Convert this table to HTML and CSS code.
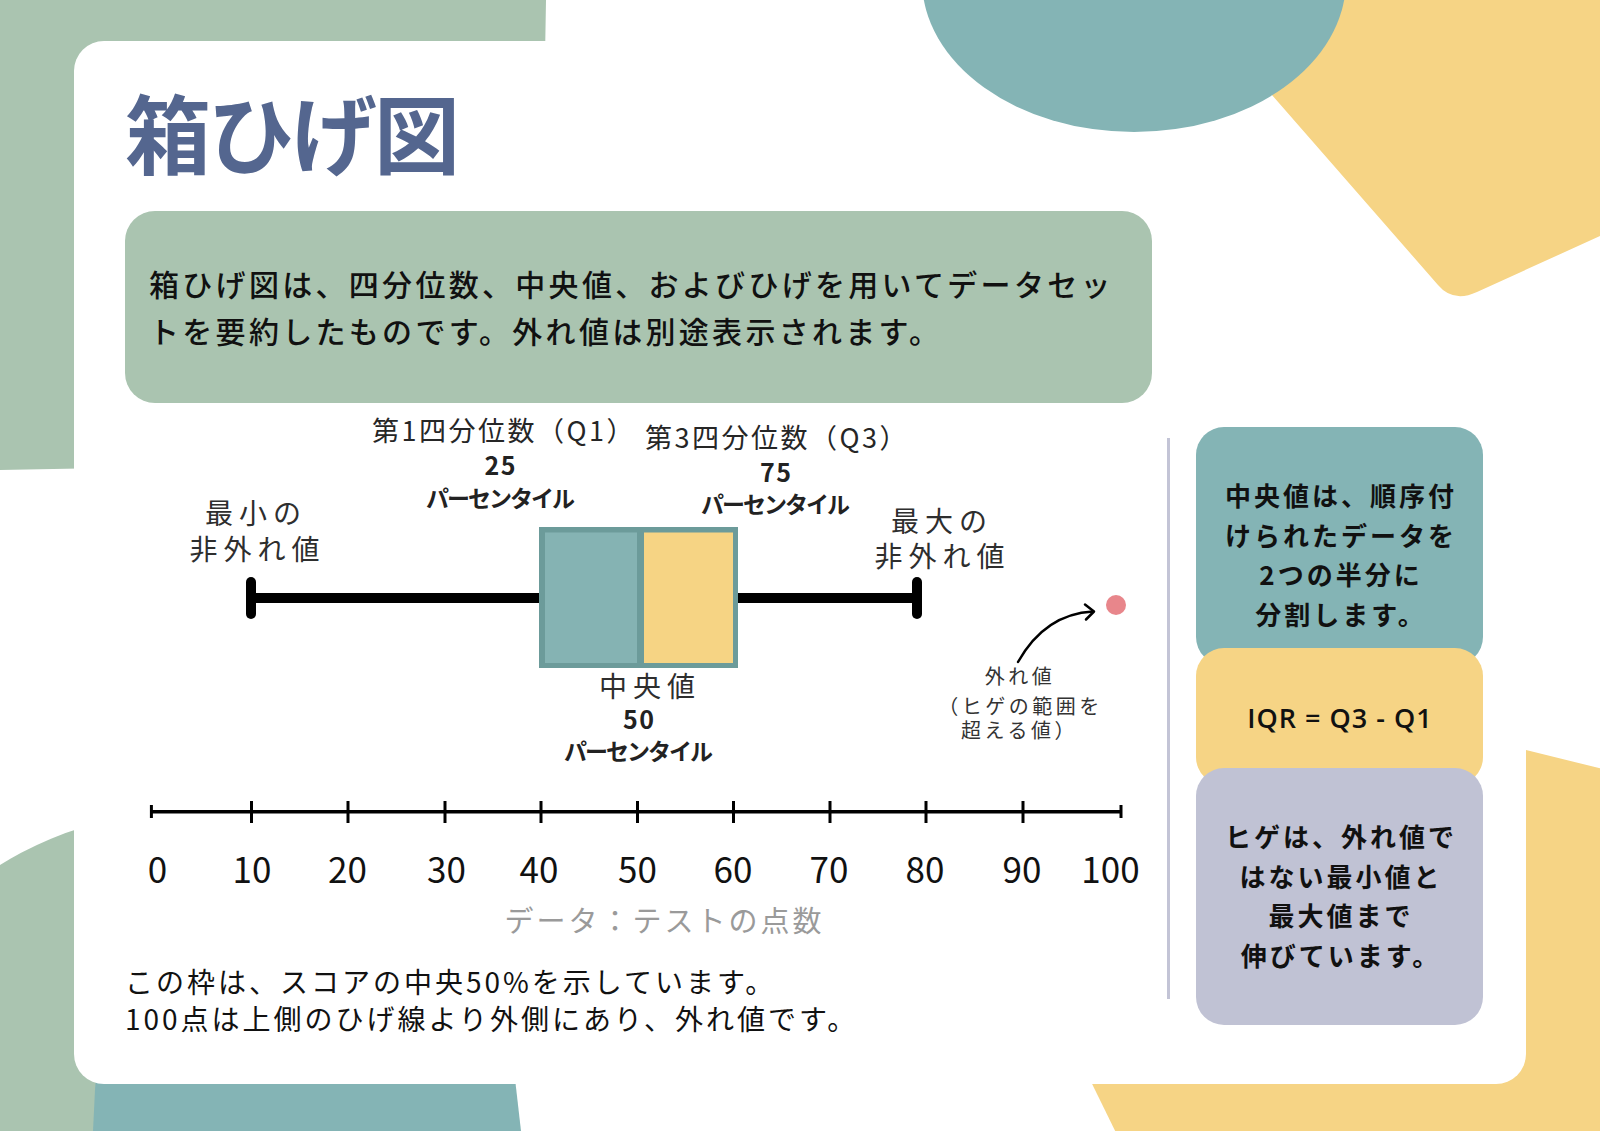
FILE: index.html
```html
<!DOCTYPE html>
<html lang="ja">
<head>
<meta charset="utf-8">
<title>箱ひげ図</title>
<link rel="stylesheet" href="styles.css">
</head>
<body>
<div class="page">
  <svg class="bg" width="1600" height="1131" viewBox="0 0 1600 1131" aria-hidden="true">
    <path class="bg-green" d="M0 0H546L538 462Q300 464 0 470Z"/>
    <circle class="bg-green" cx="180" cy="1150" r="337"/>
    <path class="bg-teal" d="M101 1070H514L521 1131H93L95 1090Q96 1072 101 1070Z"/>
    <path class="bg-yellow" d="M846 582L1700 793V1200H1149Z"/>
  </svg>

  <main class="card">
    <h1 class="title">箱ひげ図</h1>
    <p class="intro">箱ひげ図は、四分位数、中央値、およびひげを用いてデータセッ<br>トを要約したものです。外れ値は別途表示されます。</p>

    <div class="main">
      <div class="left">
        <svg class="chart" width="1042" height="537" viewBox="125 403 1042 537">
          <!-- Q1 label group -->
          <text class="t-lbl"><tspan x="504" y="441">第1四分位数（Q1）</tspan><tspan class="t-num" x="500.7" y="475">25</tspan><tspan class="t-pct" x="499.5" y="507">パーセンタイル</tspan></text>

          <!-- Q3 label group -->
          <text class="t-lbl"><tspan x="777" y="448">第3四分位数（Q3）</tspan><tspan class="t-num" x="776.3" y="482">75</tspan><tspan class="t-pct" x="774.5" y="513">パーセンタイル</tspan></text>

          <text class="t-lbl2"><tspan x="256" y="524">最小の</tspan><tspan x="257.5" y="560">非外れ値</tspan></text>
          <text class="t-lbl2"><tspan x="942" y="531.6">最大の</tspan><tspan x="942.5" y="567">非外れ値</tspan></text>

          <!-- whiskers -->
          <line class="wh" x1="251" y1="598" x2="917" y2="598"/>
          <line class="cap" x1="251" y1="582" x2="251" y2="614"/>
          <line class="cap" x1="917" y1="582" x2="917" y2="614"/>

          <!-- box -->
          <rect class="box-edge" x="539" y="527" width="199" height="141"/>
          <rect class="box-q1" x="545" y="532.5" width="92" height="130.5"/>
          <rect class="box-q3" x="644" y="532.5" width="89" height="130.5"/>

          <text class="t-lbl2"><tspan x="650" y="697">中央値</tspan><tspan class="t-num" x="639.3" y="728.5">50</tspan><tspan class="t-pct" x="637.5" y="759.5">パーセンタイル</tspan></text>

          <!-- outlier -->
          <circle class="dot" cx="1116" cy="605" r="10"/>
          <path class="arrow" d="M1018 662Q1045 614 1093 611.5"/>
          <path class="arrow" d="M1085 604.5L1094 611.5L1086 619.5"/>
          <text class="t-small"><tspan x="1020" y="684">外れ値</tspan><tspan x="1020.5" y="713.5">（ヒゲの範囲を</tspan><tspan x="1019.5" y="737.5">超える値）</tspan></text>

          <!-- axis -->
          <line class="axis" x1="151.4" y1="811.7" x2="1121" y2="811.7"/>
          <line class="tick" x1="151.4" y1="805" x2="151.4" y2="818"/>
          <line class="tick" x1="251.5" y1="801" x2="251.5" y2="823"/>
          <line class="tick" x1="348" y1="801" x2="348" y2="823"/>
          <line class="tick" x1="445" y1="801" x2="445" y2="823"/>
          <line class="tick" x1="541" y1="801" x2="541" y2="823"/>
          <line class="tick" x1="637.5" y1="801" x2="637.5" y2="823"/>
          <line class="tick" x1="733.5" y1="801" x2="733.5" y2="823"/>
          <line class="tick" x1="830" y1="801" x2="830" y2="823"/>
          <line class="tick" x1="926" y1="801" x2="926" y2="823"/>
          <line class="tick" x1="1023" y1="801" x2="1023" y2="823"/>
          <line class="tick" x1="1121" y1="805" x2="1121" y2="818"/>

          <text class="t-axis" x="157.5" y="883">0</text>
          <text class="t-axis" x="252" y="883">10</text>
          <text class="t-axis" x="347.5" y="883">20</text>
          <text class="t-axis" x="446.5" y="883">30</text>
          <text class="t-axis" x="539" y="883">40</text>
          <text class="t-axis" x="637.5" y="883">50</text>
          <text class="t-axis" x="733" y="883">60</text>
          <text class="t-axis" x="829" y="883">70</text>
          <text class="t-axis" x="925" y="883">80</text>
          <text class="t-axis" x="1022" y="883">90</text>
          <text class="t-axis" x="1110.5" y="883">100</text>

          <text class="t-data" x="664.5" y="932">データ：テストの点数</text>
        </svg>
        <p class="note">この枠は、スコアの中央50%を示しています。<br>100点は上側のひげ線より外側にあり、外れ値です。</p>
      </div>

      <div class="divider"></div>

      <div class="side">
        <div class="tip tip-teal">中央値は、順序付<br>けられたデータを<br>2つの半分に<br>分割します。</div>
        <div class="tip tip-yellow">IQR = Q3 - Q1</div>
        <div class="tip tip-lav">ヒゲは、外れ値で<br>はない最小値と<br>最大値まで<br>伸びています。</div>
      </div>
    </div>
  </main>

  <svg class="fg" width="1600" height="1131" viewBox="0 0 1600 1131" aria-hidden="true">
    <path class="bg-yellow" d="M1189 0L1438 285Q1453 303 1477 292L1600 236V0Z"/>
    <ellipse class="bg-teal" cx="1134" cy="-20" rx="212" ry="152"/>
  </svg>
</div>
</body>
</html>
```

FILE: styles.css
```css
html, body {
  margin: 0;
  padding: 0;
  background: #ffffff;
}

body {
  font-family: "Noto Sans CJK JP", "Noto Sans", sans-serif;
  color: #111111;
}

.page {
  position: relative;
  width: 1600px;
  height: 1131px;
  overflow: hidden;
  box-sizing: border-box;
  padding: 41px 0 0 74px;
  background: #ffffff;
}

.bg,
.fg {
  position: absolute;
  top: 0;
  left: 0;
  display: block;
}

.fg {
  pointer-events: none;
}

.bg-green { fill: #aac4b0; }
.bg-teal { fill: #84b4b5; }
.bg-yellow { fill: #f6d485; }

.card {
  position: relative;
  display: block;
  width: 1452px;
  height: 1043px;
  box-sizing: border-box;
  padding: 47px 0 0 51px;
  background: #ffffff;
  border-radius: 30px;
}

.title {
  margin: 0;
  font-size: 86px;
  line-height: 86px;
  font-weight: 700;
  letter-spacing: -3px;
  color: #54668f;
}

.intro {
  margin: 37px 0 0;
  width: 1027px;
  height: 192px;
  box-sizing: border-box;
  padding: 49px 0 0 24px;
  border-radius: 30px;
  background: #aac4b0;
  font-size: 30px;
  line-height: 47px;
  letter-spacing: 3.3px;
  font-weight: 500;
  white-space: nowrap;
  color: #111111;
}

.main {
  display: flex;
  align-items: flex-start;
}

.left {
  width: 1042px;
  flex: none;
}

.chart {
  display: block;
  overflow: visible;
}

.chart text {
  font-family: "Noto Sans CJK JP", "Noto Sans", sans-serif;
  text-anchor: middle;
}

.t-lbl { font-size: 27px; letter-spacing: 2.5px; fill: #262626; }
.t-lbl2 { font-size: 28px; letter-spacing: 6px; fill: #2e2e2e; }
.t-num { font-size: 25px; font-weight: 700; letter-spacing: 1.5px; fill: #222222; }
.t-pct { font-size: 23px; font-weight: 700; letter-spacing: -2px; fill: #222222; }
.t-small { font-size: 20px; letter-spacing: 3.5px; fill: #333333; }
.t-axis { font-size: 35px; fill: #111111; }
.t-data { font-size: 29px; letter-spacing: 3px; fill: #9a9a9a; }

.wh { stroke: #000000; stroke-width: 10; }
.cap { stroke: #000000; stroke-width: 10; stroke-linecap: round; }
.box-edge { fill: #6c9b9a; }
.box-q1 { fill: #85b3b3; }
.box-q3 { fill: #f6d484; }
.dot { fill: #e8868b; }
.arrow { fill: none; stroke: #000000; stroke-width: 2.5; stroke-linecap: round; stroke-linejoin: round; }
.axis { stroke: #000000; stroke-width: 3.5; }
.tick { stroke: #000000; stroke-width: 3; }

.note {
  margin: 23px 0 0;
  font-size: 28px;
  line-height: 37px;
  letter-spacing: 3px;
  color: #111111;
  white-space: nowrap;
}

.divider {
  flex: none;
  width: 3px;
  height: 561px;
  margin-top: 35px;
  background: #c3c4d6;
}

.side {
  flex: none;
  width: 287px;
  margin: 24px 0 0 26px;
  display: flex;
  flex-direction: column;
}

.tip {
  box-sizing: border-box;
  border-radius: 28px;
  text-align: center;
  font-size: 26px;
  line-height: 39.5px;
  letter-spacing: 3px;
  padding-left: 3px;
  font-weight: 700;
  color: #111111;
  white-space: nowrap;
}

.tip-teal {
  height: 238px;
  padding-top: 48px;
  background: #84b4b5;
}

.tip-yellow {
  height: 137px;
  margin-top: -17px;
  padding-top: 50px;
  padding-left: 1px;
  background: #f6d485;
  font-family: "Open Sans", "Noto Sans", sans-serif;
  font-size: 27px;
  line-height: 40px;
  letter-spacing: 1px;
  font-weight: 600;
}

.tip-lav {
  height: 257px;
  margin-top: -17px;
  padding-top: 48px;
  background: #c0c2d4;
}
```
